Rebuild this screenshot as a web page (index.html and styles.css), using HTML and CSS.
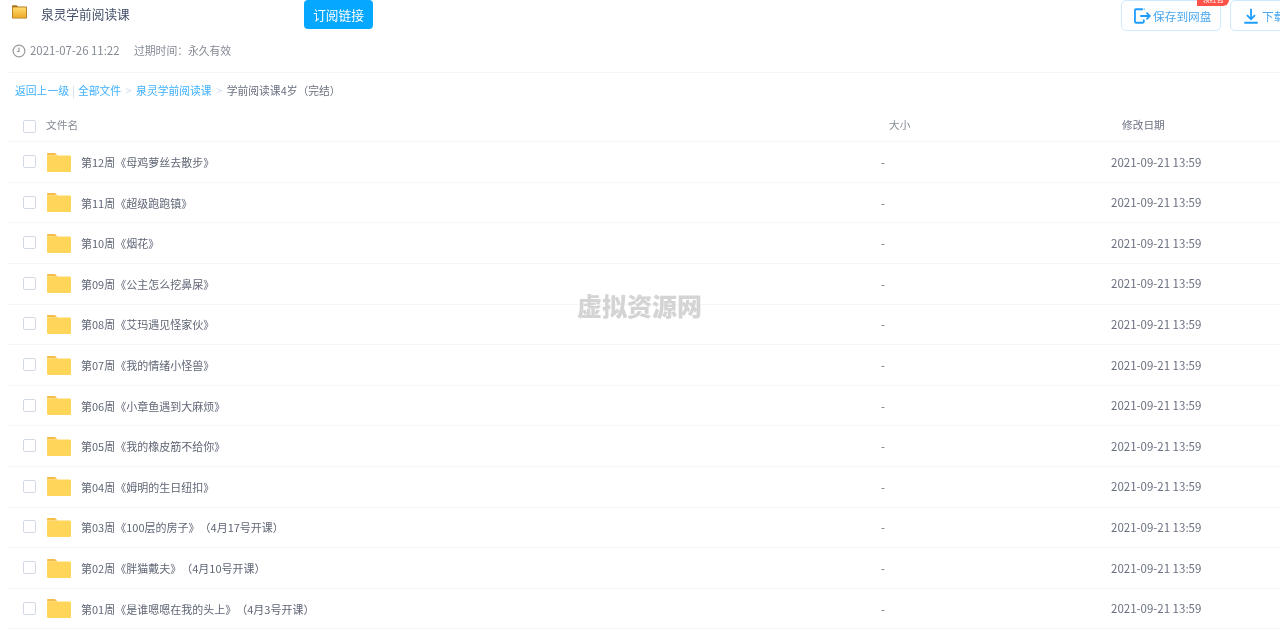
FILE: index.html
```html
<!DOCTYPE html>
<html lang="zh-CN">
<head>
<meta charset="utf-8">
<title>泉灵学前阅读课</title>
<link rel="stylesheet" href="styles.css">
</head>
<body>
<div class="page">
  <header class="toolbar">
    <svg class="share-folder" viewBox="0 0 15 14"><defs><linearGradient id="sf" x1="0" y1="0" x2="0" y2="1"><stop offset="0" stop-color="#ffdc6e"/><stop offset="1" stop-color="#eda92a"/></linearGradient></defs><path d="M0 1.500C0 .7.500.2 1.200.2h3.400L6 1.600h8c.6 0 1 .4 1 1v10c0 .6-.4 1-1 1H1c-.6 0-1-.4-1-1z" fill="#a9741c"/><rect x=".8" y="2.400" width="13.400" height="10.400" fill="url(#sf)"/></svg>
    <h1 class="title">泉灵学前阅读课</h1>
    <button class="subscribe">订阅链接</button>
    <div class="actions">
      <button class="action save">
        <svg class="action-icon" viewBox="0 0 20 20" fill="none" stroke="#1f9dff" stroke-width="2"><path d="M11 2.500H3.200a1 1 0 0 0-1 1v13a1 1 0 0 0 1 1H11a1 1 0 0 0 1-1V14M12 2.500a1 1 0 0 1 .6.3M8 10h10.500M15 6.300 18.700 10 15 13.700"/></svg>
        保存到网盘
        <span class="badge">领红包</span>
      </button>
      <button class="action download">
        <svg class="action-icon" viewBox="0 0 20 20" fill="none" stroke="#1f9dff" stroke-width="2"><path d="M10 2v11M5.500 9 10 13.500 14.500 9M2.500 17.500h15"/></svg>
        下载
      </button>
    </div>
  </header>
  <div class="meta">
    <svg class="clock" viewBox="0 0 14 14" fill="none" stroke="#999" stroke-width="1.200"><circle cx="7" cy="7" r="5.900"/><path d="M7 3.500V7.500H4.800"/></svg>
    <span class="created">2021-07-26 11:22</span>
    <span>过期时间：永久有效</span>
  </div>
  <nav class="crumbs">
    <a>返回上一级</a><i class="pipe">|</i><a>全部文件</a><i class="gt">&gt;</i><a>泉灵学前阅读课</a><i class="gt">&gt;</i><span>学前阅读课4岁（完结）</span>
  </nav>
  <div class="row head">
    <span class="check"></span>
    <span class="name">文件名</span>
    <span class="size">大小</span>
    <span class="date">修改日期</span>
  </div>
  <div class="row"><span class="check"></span><svg class="folder" viewBox="0 0 24 19"><use href="#fo"/></svg><span class="name">第12周《母鸡萝丝去散步》</span><span class="size">-</span><span class="date">2021-09-21 13:59</span></div>
  <div class="row"><span class="check"></span><svg class="folder" viewBox="0 0 24 19"><use href="#fo"/></svg><span class="name">第11周《超级跑跑镇》</span><span class="size">-</span><span class="date">2021-09-21 13:59</span></div>
  <div class="row"><span class="check"></span><svg class="folder" viewBox="0 0 24 19"><use href="#fo"/></svg><span class="name">第10周《烟花》</span><span class="size">-</span><span class="date">2021-09-21 13:59</span></div>
  <div class="row"><span class="check"></span><svg class="folder" viewBox="0 0 24 19"><use href="#fo"/></svg><span class="name">第09周《公主怎么挖鼻屎》</span><span class="size">-</span><span class="date">2021-09-21 13:59</span></div>
  <div class="row"><span class="check"></span><svg class="folder" viewBox="0 0 24 19"><use href="#fo"/></svg><span class="name">第08周《艾玛遇见怪家伙》</span><span class="size">-</span><span class="date">2021-09-21 13:59</span></div>
  <div class="row"><span class="check"></span><svg class="folder" viewBox="0 0 24 19"><use href="#fo"/></svg><span class="name">第07周《我的情绪小怪兽》</span><span class="size">-</span><span class="date">2021-09-21 13:59</span></div>
  <div class="row"><span class="check"></span><svg class="folder" viewBox="0 0 24 19"><use href="#fo"/></svg><span class="name">第06周《小章鱼遇到大麻烦》</span><span class="size">-</span><span class="date">2021-09-21 13:59</span></div>
  <div class="row"><span class="check"></span><svg class="folder" viewBox="0 0 24 19"><use href="#fo"/></svg><span class="name">第05周《我的橡皮筋不给你》</span><span class="size">-</span><span class="date">2021-09-21 13:59</span></div>
  <div class="row"><span class="check"></span><svg class="folder" viewBox="0 0 24 19"><use href="#fo"/></svg><span class="name">第04周《姆明的生日纽扣》</span><span class="size">-</span><span class="date">2021-09-21 13:59</span></div>
  <div class="row"><span class="check"></span><svg class="folder" viewBox="0 0 24 19"><use href="#fo"/></svg><span class="name">第03周《100层的房子》（4月17号开课）</span><span class="size">-</span><span class="date">2021-09-21 13:59</span></div>
  <div class="row"><span class="check"></span><svg class="folder" viewBox="0 0 24 19"><use href="#fo"/></svg><span class="name">第02周《胖猫戴夫》（4月10号开课）</span><span class="size">-</span><span class="date">2021-09-21 13:59</span></div>
  <div class="row"><span class="check"></span><svg class="folder" viewBox="0 0 24 19"><use href="#fo"/></svg><span class="name">第01周《是谁嗯嗯在我的头上》（4月3号开课）</span><span class="size">-</span><span class="date">2021-09-21 13:59</span></div>
  <div class="watermark">虚拟资源网</div>
</div>
<svg class="defs" width="0" height="0"><symbol id="fo" viewBox="0 0 24 19"><path d="M0 1.200C0 .5.500 0 1.200 0h6.300c.5 0 .8.200 1.100.5L10.500 2.500H0z" fill="#f5bd45"/><rect y="2.500" width="24" height="16.500" rx="1.200" fill="#ffd659"/></symbol></svg>
</body>
</html>
```
FILE: styles.css
```css
* { box-sizing: border-box; }
html, body { margin: 0; height: 100%; overflow: hidden; background: #fff; }
body { font-family: "Noto Sans CJK SC", "Open Sans", sans-serif; color: #666; font-size: 11px; text-spacing-trim: space-all; }
.page { position: relative; height: 633px; overflow: hidden; padding-left: 8px; filter: blur(0.3px); }
.toolbar { display: flex; align-items: flex-start; height: 39px; padding-left: 4px; }
.share-folder { width: 15px; height: 14px; margin-top: 5px; flex: none; }
.title { margin: 5px 0 0 14px; width: 263px; flex: none; font-size: 12.700px; line-height: 18px; font-weight: 400; color: #424e67; }
.subscribe { flex: none; width: 69px; height: 29px; border: 0; border-radius: 4px; background: #06a7ff; color: #fff; font: inherit; font-size: 12.700px; padding: 0; }
.actions { display: flex; flex: none; gap: 9px; margin-left: 748px; }
.action { position: relative; flex: none; display: flex; align-items: center; gap: 2px; height: 31px; width: 100px; padding: 0 0 0 11px; background: #fff; border: 1px solid #cdeaff; border-radius: 5px; color: #4aa8f0; font: inherit; font-size: 11.700px; white-space: nowrap; }
.download { width: 80px; padding-left: 11px; }
.action-icon { width: 18px; height: 18px; flex: none; }
.badge { position: absolute; left: 75px; top: -7px; width: 32px; height: 12px; border-radius: 6px 6px 6px 0; background: #ff5148; color: #fff; font-size: 7px; line-height: 11px; text-align: center; }
.meta { display: flex; align-items: center; height: 22px; padding-left: 4px; color: #858a94; font-size: 10.800px; }
.clock { width: 14px; height: 14px; flex: none; margin: 2px 4px 0 0; }
.created { width: 104px; font-size: 11.400px; }
.crumbs { display: flex; align-items: center; margin-top: 11px; border-top: 1px solid #f4f5f8; height: 36px; padding: 0 0 2px 7px; color: #6a7080; font-size: 10.800px; }
.crumbs a { color: #3fb0ff; }
.crumbs i { font-style: normal; color: #c7d9ee; }
.pipe { margin: 0 3px; }
.gt { margin: 0 4.500px; }
.row { display: flex; align-items: center; height: 40.600px; border-bottom: 1px solid #f5f6fa; }
.row.head { height: 34.300px; color: #858a94; }
.check { width: 13px; height: 13px; flex: none; margin-left: 14.500px; margin-bottom: 1px; border: 1px solid #d3d9e4; border-radius: 2px; background: #fff; }
.head .check { margin-bottom: -3px; }
.folder { width: 24px; height: 19px; flex: none; margin-left: 11.500px; }
.name { flex: none; width: 800px; margin-left: 10px; white-space: nowrap; color: #5f6675; }
.head .name { margin-left: 10.500px; width: 843px; font-size: 10.700px; color: #858a94; }
.size { flex: none; width: 230px; }
.head .size { width: 233px; font-size: 10.700px; }
.date { flex: none; font-size: 11.500px; line-height: 14px; color: #6a7080; margin-top: -1px; }
.head .date { font-size: 10.700px; margin-top: 0; }
.watermark { position: absolute; left: 577px; top: 287px; font-size: 25px; line-height: 36px; font-weight: 900; color: #d4d4d4; white-space: nowrap; }
.defs { position: absolute; }
```
